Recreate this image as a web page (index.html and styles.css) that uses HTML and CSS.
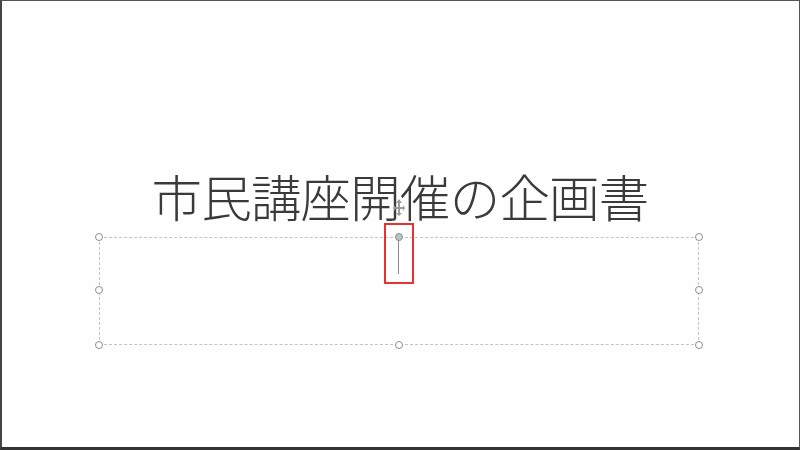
FILE: index.html
```html
<!DOCTYPE html>
<html lang="ja">
<head>
<meta charset="utf-8">
<link rel="stylesheet" href="styles.css">
</head>
<body>
<div class="frame">
  <h1 class="title">市民講座開催の企画書</h1>
  <div class="box">
    <span class="h tl"></span><span class="h tc"></span><span class="h tr"></span>
    <span class="h ml"></span><span class="h mr"></span>
    <span class="h bl"></span><span class="h bc"></span><span class="h br"></span>
    <span class="stem"></span>
    <span class="mark"></span>
    <svg class="cursor" width="12" height="18" viewBox="0 0 12 18"><path d="M6 1 L3 5 H5 V9 H2 V7 L0 10 L2 13 V11 H5 V15 H3 L6 18 L9 15 H7 V11 H10 V13 L12 10 L10 7 V9 H7 V5 H9 Z" fill="#9a9a9a"/></svg>
  </div>
</div>
</body>
</html>
```
FILE: styles.css
```css
html, body { margin: 0; padding: 0; }
body { width: 800px; height: 450px; background: #fff; }
.frame {
  width: 800px; height: 450px; box-sizing: border-box;
  border: 1px solid #555; border-left: 2px solid #444; border-bottom: 3px solid #333;
  background: #fdfefd;
  display: flex; flex-direction: column; align-items: flex-start;
}
.title {
  margin: 160px 0 0 0; width: 796px; text-align: center;
  font-family: "Noto Sans CJK JP", sans-serif; font-weight: 300;
  font-size: 50.5px; line-height: 68px; color: #3a3a3a; letter-spacing: -0.8px;
}
.box {
  position: relative; margin: 8px 0 0 97px;
  width: 600px; height: 108px; box-sizing: border-box;
  border: 1px dashed #c4c4c4;
}
.h {
  position: absolute; width: 8px; height: 8px; border: 1.5px solid #8e8e8e;
  border-radius: 50%; background: #fff; box-sizing: border-box;
}
.tl { left: -5px; top: -5px; } .tc { left: 295px; top: -5px; background: #b9c4cc; } .tr { right: -5px; top: -5px; }
.ml { left: -5px; top: 48px; } .mr { right: -5px; top: 48px; }
.bl { left: -5px; bottom: -5px; } .bc { left: 295px; bottom: -5px; } .br { right: -5px; bottom: -5px; }
.stem { position: absolute; left: 298px; top: 2px; width: 1px; height: 34px; background: #8a8a8a; }
.mark { position: absolute; left: 284px; top: -15px; width: 30px; height: 61px; border: 2px solid #e83232; box-sizing: border-box; }
.cursor { position: absolute; left: 293px; top: -40px; }
```
